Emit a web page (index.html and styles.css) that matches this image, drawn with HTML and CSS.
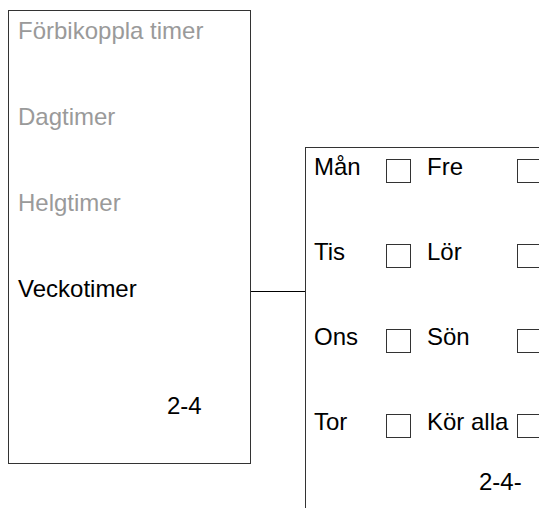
FILE: index.html
```html
<!DOCTYPE html>
<html lang="sv">
<head>
    <meta charset="UTF-8">
    <meta name="viewport" content="width=device-width, initial-scale=1.0">
    <title>Timer</title>
    <link rel="stylesheet" href="styles.css">
</head>
<body>
    <div class="menu">
        <div class="item muted">Förbikoppla timer</div>
        <div class="item muted">Dagtimer</div>
        <div class="item muted">Helgtimer</div>
        <div class="item">Veckotimer</div>
        <div class="item page">2-4</div>
    </div>
    <div class="link"></div>
    <div class="days">
        <div class="grid">
            <span>Mån</span><span class="box"></span><span>Fre</span><span class="box"></span>
            <span>Tis</span><span class="box"></span><span>Lör</span><span class="box"></span>
            <span>Ons</span><span class="box"></span><span>Sön</span><span class="box"></span>
            <span>Tor</span><span class="box"></span><span>Kör alla</span><span class="box"></span>
        </div>
        <div class="page-sub">2-4-</div>
    </div>
</body>
</html>
```
FILE: styles.css
```css
body {
    margin: 0;
    height: 508px;
    overflow: hidden;
    display: flex;
    align-items: flex-start;
    background: #ffffff;
    color: #000000;
    font-family: 'Liberation Sans', Arial, sans-serif;
    font-size: 24px;
    line-height: 26px;
}
.menu {
    box-sizing: border-box;
    flex: none;
    width: 243px;
    height: 454px;
    margin: 10px 0 0 8px;
    padding: 7px 0 0 9px;
    border: 1px solid #333333;
    display: flex;
    flex-direction: column;
    gap: 60px;
}
.item {
    white-space: nowrap;
}
.muted {
    color: #9a9a9a;
}
.page {
    margin-top: 31px;
    padding-left: 149px;
}
.link {
    flex: none;
    width: 54px;
    height: 1px;
    margin-top: 291px;
    background: #000000;
}
.days {
    box-sizing: border-box;
    flex: none;
    width: 234px;
    height: 361px;
    margin-top: 147px;
    padding: 6px 0 0 8px;
    border-top: 1px solid #333333;
    border-left: 1px solid #333333;
    overflow: hidden;
}
.grid {
    display: grid;
    grid-template-columns: 72px 41px 90px 25px;
    row-gap: 56px;
    align-items: start;
}
.grid span {
    white-space: nowrap;
}
.box {
    box-sizing: border-box;
    width: 25px;
    height: 24px;
    margin-top: 5px;
    border: 1px solid #333333;
}
.page-sub {
    margin-top: 31px;
    padding-left: 165px;
}
```
